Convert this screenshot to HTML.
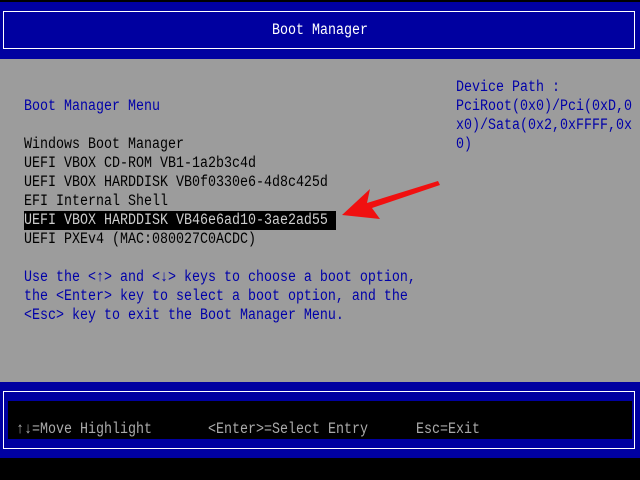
<!DOCTYPE html>
<html><head><meta charset="utf-8"><style>
body{margin:0;width:640px;height:480px;background:#000;position:relative;overflow:hidden;font-family:"Liberation Mono","DejaVu Sans Mono",monospace;font-size:13.33px}
.a{position:absolute;white-space:pre;line-height:19px;height:19px}
.a span{display:inline-block;transform:scaleY(1.15);transform-origin:50% 60%}
.b{color:#0000a8}.k{color:#000}
</style></head><body>
<div style="position:absolute;left:0;top:2px;width:640px;height:57px;background:#0000a0"></div>
<div style="position:absolute;left:3px;top:11px;width:630px;height:36px;border:1px solid #fff"></div>
<div class="a" style="left:0;width:640px;text-align:center;top:22px;color:#fff"><span>Boot Manager</span></div>
<div style="position:absolute;left:0;top:59px;width:640px;height:323px;background:#9c9c9c"></div>
<div class="a b" style="left:24px;top:98px"><span>Boot Manager Menu</span></div>
<div class="a k" style="left:24px;top:136px"><span>Windows Boot Manager</span></div>
<div class="a k" style="left:24px;top:155px"><span>UEFI VBOX CD-ROM VB1-1a2b3c4d</span></div>
<div class="a k" style="left:24px;top:174px"><span>UEFI VBOX HARDDISK VB0f0330e6-4d8c425d</span></div>
<div class="a k" style="left:24px;top:193px"><span>EFI Internal Shell</span></div>
<div style="position:absolute;left:24px;top:211px;width:312px;height:19px;background:#000"></div>
<div class="a" style="left:24px;top:212px;color:#ccc"><span>UEFI VBOX HARDDISK VB46e6ad10-3ae2ad55</span></div>
<div class="a k" style="left:24px;top:231px"><span>UEFI PXEv4 (MAC:080027C0ACDC)</span></div>
<div class="a b" style="left:24px;top:269px"><span>Use the &lt;↑&gt; and &lt;↓&gt; keys to choose a boot option,</span></div>
<div class="a b" style="left:24px;top:288px"><span>the &lt;Enter&gt; key to select a boot option, and the</span></div>
<div class="a b" style="left:24px;top:307px"><span>&lt;Esc&gt; key to exit the Boot Manager Menu.</span></div>
<div class="a b" style="left:456px;top:79px"><span>Device Path :</span></div>
<div class="a b" style="left:456px;top:98px"><span>PciRoot(0x0)/Pci(0xD,0</span></div>
<div class="a b" style="left:456px;top:117px"><span>x0)/Sata(0x2,0xFFFF,0x</span></div>
<div class="a b" style="left:456px;top:136px"><span>0)</span></div>
<svg style="position:absolute;left:0;top:0" width="640" height="480"><polygon points="342,215 370,189 367,203 438,181 440,185 372,208 380,219" fill="#f01010"/></svg>
<div style="position:absolute;left:0;top:382px;width:640px;height:76px;background:#0000a0"></div>
<div style="position:absolute;left:3px;top:391px;width:630px;height:56px;border:1px solid #fff"></div>
<div style="position:absolute;left:8px;top:401px;width:624px;height:38px;background:#000"></div>
<div class="a" style="left:16px;top:421px;color:#aaa"><span>↑↓=Move Highlight</span></div>
<div class="a" style="left:208px;top:421px;color:#aaa"><span>&lt;Enter&gt;=Select Entry</span></div>
<div class="a" style="left:416px;top:421px;color:#aaa"><span>Esc=Exit</span></div>
</body></html>
